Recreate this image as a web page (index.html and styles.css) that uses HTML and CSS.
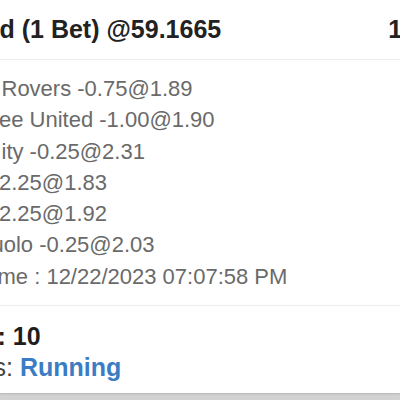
FILE: index.html
```html
<!DOCTYPE html>
<html>
<head>
<meta charset="utf-8">
<link rel="stylesheet" href="styles.css">
</head>
<body>
<div class="card">
  <div class="card-head">
    <div class="title">d (1 Bet) @59.1665</div>
    <div class="stake">10</div>
  </div>
  <div class="card-body">
    <div class="line in-r">Rovers -0.75@1.89</div>
    <div class="line in-e">ee United -1.00@1.90</div>
    <div class="line in-i">ity -0.25@2.31</div>
    <div class="line in-n">2.25@1.83</div>
    <div class="line in-n">2.25@1.92</div>
    <div class="line in-u">uolo -0.25@2.03</div>
    <div class="line in-m">me : 12/22/2023 07:07:58 PM</div>
  </div>
  <div class="card-foot">
    <div class="foot-line in-colon">: 10</div>
    <div class="foot-line in-s">s: <span class="status">Running</span></div>
  </div>
</div>
</body>
</html>
```

FILE: styles.css
```css
html, body {
  margin: 0;
  padding: 0;
  overflow: hidden;
}
body {
  background: #d2d2d2;
  font-family: "Liberation Sans", Arial, sans-serif;
  width: 400px;
  height: 400px;
}
.card {
  background: #ffffff;
  width: 400px;
  height: 393px;
  box-shadow: 0 1px 2px rgba(0,0,0,0.15);
}
.card-head {
  height: 59px;
  display: flex;
  align-items: center;
  justify-content: space-between;
  border-bottom: 1px solid #ececec;
  overflow: hidden;
}
.title {
  font-size: 25px;
  font-weight: bold;
  color: #222222;
  white-space: nowrap;
  text-indent: -0.5px;
}
.stake {
  font-size: 25px;
  font-weight: bold;
  color: #222222;
  margin-right: -16px;
}
.card-body {
  padding: 13px 0 13px 0;
  border-bottom: 1px solid #ececec;
  overflow: hidden;
}
.line {
  font-size: 22px;
  line-height: 31.3px;
  color: #6a6a6a;
  white-space: nowrap;
}
.card-foot {
  padding: 15px 0 0 0;
  overflow: hidden;
}
.foot-line {
  font-size: 25px;
  font-weight: bold;
  line-height: 31px;
  color: #1e1e1e;
  white-space: nowrap;
}
.foot-line.in-s {
  font-weight: normal;
  color: #444444;
}
.status {
  font-weight: bold;
  color: #3b7dc4;
}
.in-r { text-indent: 1.5px; }
.in-e { text-indent: -1px; }
.in-i { text-indent: 1.5px; }
.in-n { text-indent: -1px; }
.in-u { text-indent: -8.5px; }
.in-m { text-indent: -2.5px; }
.in-colon { text-indent: -2.5px; }
.in-s { text-indent: -6.5px; }
```
